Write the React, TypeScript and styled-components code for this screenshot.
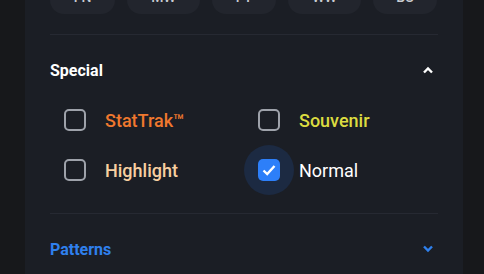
import styled, { createGlobalStyle } from "styled-components";

const Global = createGlobalStyle`
  html, body {
    margin: 0;
    padding: 0;
    background: #17181b;
    font-family: Roboto, "Noto Sans", sans-serif;
  }
`;

const Page = styled.div`
  display: flex;
  width: 484px;
  height: 274px;
  overflow: hidden;
`;

const Gutter = styled.div<{ $w: number }>`
  width: ${(p) => p.$w}px;
  flex-shrink: 0;
  background: #17181b;
`;

const Panel = styled.div`
  width: 438px;
  flex-shrink: 0;
  background: #1b1e25;
  padding: 0 25px;
  box-sizing: border-box;
  display: flex;
  flex-direction: column;
`;

const Chips = styled.div`
  display: flex;
  gap: 12px;
  margin-top: -14px;
`;

const Chip = styled.div<{ $w: number }>`
  width: ${(p) => p.$w}px;
  height: 28px;
  border-radius: 14px;
  background: #22252d;
  color: #c9ccd2;
  font-size: 14px;
  font-weight: 500;
  display: flex;
  align-items: center;
  justify-content: center;
  line-height: 1;
  padding-bottom: 6px;
  box-sizing: border-box;
`;

const Divider = styled.div<{ $top: number }>`
  height: 1px;
  background: #262932;
  margin-top: ${(p) => p.$top}px;
`;

const SectionHead = styled.div<{ $color: string; $top: number }>`
  display: flex;
  align-items: center;
  justify-content: space-between;
  margin-top: ${(p) => p.$top}px;
  height: 20px;
  color: ${(p) => p.$color};
  font-size: 16px;
  font-weight: 700;
  padding-right: 4px;
`;

const Grid = styled.div`
  display: grid;
  grid-template-columns: 194px 1fr;
  row-gap: 10px;
  margin-top: 20px;
`;

const Option = styled.label`
  display: flex;
  align-items: center;
  gap: 5px;
  height: 40px;
`;

const BoxWrap = styled.span<{ $on: boolean }>`
  width: 50px;
  height: 50px;
  margin: -5px 0;
  border-radius: 50%;
  background: ${(p) => (p.$on ? "#1c2a42" : "transparent")};
  display: flex;
  align-items: center;
  justify-content: center;
`;

const Box = styled.span<{ $on: boolean }>`
  width: 22px;
  height: 22px;
  box-sizing: border-box;
  border-radius: 5px;
  border: ${(p) => (p.$on ? "none" : "2px solid #9ea2aa")};
  background: ${(p) => (p.$on ? "#2d7ff9" : "transparent")};
  display: flex;
  align-items: center;
  justify-content: center;
`;

const Label = styled.span<{ $color: string }>`
  color: ${(p) => p.$color};
  font-size: 18px;
  font-weight: ${(p) => (p.$color === "#ffffff" ? 400 : 500)};
`;

const Chevron = ({ up, color }: { up?: boolean; color: string }) => (
  <svg width="12" height="8" viewBox="0 0 12 8">
    <path
      d={up ? "M2 6.5 L6 2.5 L10 6.5" : "M2 1.5 L6 5.5 L10 1.5"}
      fill="none"
      stroke={color}
      strokeWidth="2.4"
    />
  </svg>
);

const options = [
  { name: "StatTrak™", color: "#f0782e", on: false },
  { name: "Souvenir", color: "#dcdc40", on: false },
  { name: "Highlight", color: "#f7cfa0", on: false },
  { name: "Normal", color: "#ffffff", on: true },
];

const App = () => (
  <>
    <Global />
    <Page>
      <Gutter $w={25} />
      <Panel>
        <Chips>
          {[
            ["FN", 65],
            ["MW", 73],
            ["FT", 64],
            ["WW", 73],
            ["BS", 64],
          ].map(([t, w]) => (
            <Chip key={t} $w={w as number}>
              {t}
            </Chip>
          ))}
        </Chips>
        <Divider $top={20} />
        <SectionHead $color="#ffffff" $top={25}>
          <span>Special</span>
          <Chevron up color="#ffffff" />
        </SectionHead>
        <Grid>
          {options.map((o) => (
            <Option key={o.name}>
              <BoxWrap $on={o.on}>
                <Box $on={o.on}>
                  {o.on && (
                    <svg width="16" height="16" viewBox="0 0 16 16">
                      <path
                        d="M2.5 8.5 L6.2 12 L13.5 4"
                        fill="none"
                        stroke="#ffffff"
                        strokeWidth="2.4"
                      />
                    </svg>
                  )}
                </Box>
              </BoxWrap>
              <Label $color={o.color}>{o.name}</Label>
            </Option>
          ))}
        </Grid>
        <Divider $top={23} />
        <SectionHead $color="#2f80ed" $top={25}>
          <span>Patterns</span>
          <Chevron color="#2f80ed" />
        </SectionHead>
      </Panel>
      <Gutter $w={21} />
    </Page>
  </>
);

export default App;
